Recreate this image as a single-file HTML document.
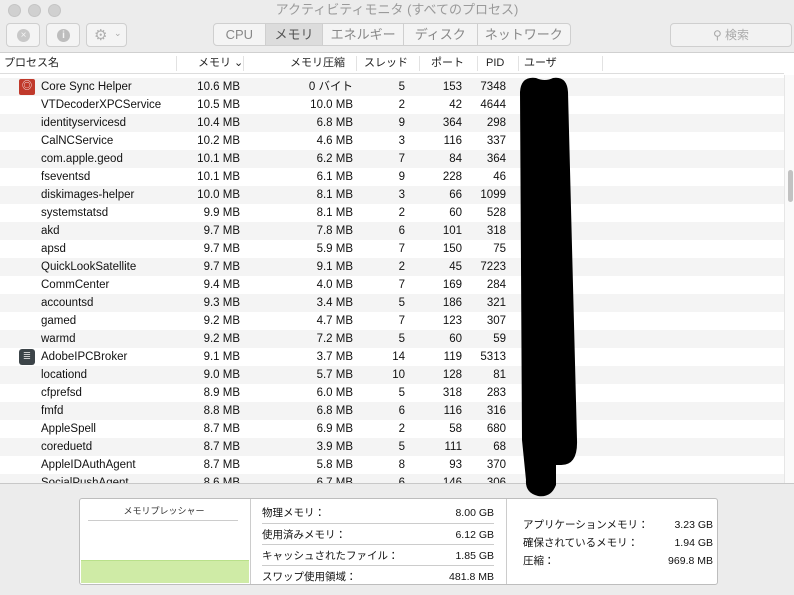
<!DOCTYPE html>
<html><head><meta charset="utf-8"><style>
*{margin:0;padding:0;box-sizing:border-box}
body{width:794px;height:595px;overflow:hidden;background:#fff;font-family:"Liberation Sans","Noto Sans CJK JP",sans-serif;font-size:11px;color:#111;position:relative}
.abs{position:absolute}
.tb{left:0;top:0;width:794px;height:53px;background:#ececec;border-bottom:1px solid #d0d0d0}
.dot{width:13px;height:13px;border-radius:50%;background:#d0d0d0;top:4px;border:1px solid #c4c4c4}
.btn{height:24px;top:23px;border:1px solid #cfcfcf;border-radius:4px;background:#f4f4f4}
.seg{top:23px;height:23px;border:1px solid #cfcfcf;border-radius:4px;background:#f4f4f4;display:flex;left:213px;width:358px;overflow:hidden}
.seg div{border-right:1px solid #cfcfcf;text-align:center;line-height:21px;font-size:13px;color:#888}
.hd{top:53px;height:21px;left:0;width:784px;border-bottom:1px solid #ddd;background:#fff}
.hd span{position:absolute;top:3px;font-size:11px;line-height:14px;color:#222}
.vs{position:absolute;top:3px;width:1px;height:15px;background:#e2e2e2}
.row{left:0;width:784px;height:18px}
.row span{position:absolute;top:2px;font-size:11.5px;line-height:14px}
.r{text-align:right}
.bp div{line-height:14px}
</style></head><body>
<div class="abs tb"></div>
<div class="abs dot" style="left:8px"></div><div class="abs dot" style="left:28px"></div><div class="abs dot" style="left:48px"></div>
<div class="abs" style="top:2px;left:0;width:794px;text-align:center;font-size:13px;line-height:16px;color:#9a9a9a">アクティビティモニタ (すべてのプロセス)</div>
<div class="abs btn" style="left:6px;width:34px"><div style="position:absolute;left:10px;top:5px;width:13px;height:13px;border-radius:50%;background:#c8c8c8;color:#f4f4f4;font-size:10px;line-height:13px;text-align:center">×</div></div>
<div class="abs btn" style="left:46px;width:34px"><div style="position:absolute;left:10px;top:5px;width:13px;height:13px;border-radius:50%;background:#bdbdbd;color:#f4f4f4;font-size:10px;font-weight:bold;line-height:13px;text-align:center">i</div></div>
<div class="abs btn" style="left:86px;width:41px"><span style="position:absolute;left:7px;top:2px;font-size:15px;color:#b0b0b0">⚙</span><span style="position:absolute;left:27px;top:4px;font-size:9px;color:#aaa">⌄</span></div>
<div class="abs seg"><div style="width:52px">CPU</div><div style="width:58px;background:#dcdcdc;color:#555">メモリ</div><div style="width:81px">エネルギー</div><div style="width:74px">ディスク</div><div style="width:93px;border:none">ネットワーク</div></div>
<div class="abs btn" style="left:670px;width:122px;background:#f2f2f2;color:#aaa;font-size:12px;text-align:center;line-height:22px">⚲ 検索</div>
<div class="abs hd">
<span style="left:4px">プロセス名</span><div class="vs" style="left:176px"></div>
<span style="left:198px">メモリ ⌄</span><div class="vs" style="left:243px"></div>
<span style="left:290px">メモリ圧縮</span><div class="vs" style="left:356px"></div>
<span style="left:364px">スレッド</span><div class="vs" style="left:419px"></div>
<span style="left:431px">ポート</span><div class="vs" style="left:477px"></div>
<span style="left:486px">PID</span><div class="vs" style="left:518px"></div>
<span style="left:524px">ユーザ</span><div class="vs" style="left:602px"></div>
</div>
<div id="rows"></div>
<div class="abs" style="left:784px;top:75px;width:10px;height:408px;background:#fafafa;border-left:1px solid #e6e6e6"></div>
<div class="abs" style="left:788px;top:170px;width:5px;height:32px;background:#c2c2c2;border-radius:3px"></div>
<div class="abs" style="left:0;top:483px;width:794px;height:112px;background:#ececec;border-top:1px solid #c8c8c8"></div>
<svg class="abs" style="left:0;top:0" width="794" height="595"><path d="M520,92 Q521,76 536,78 Q545,82 553,78 Q567,76 568,92 L577,440 Q578,466 560,465 L556,465 L556,485 Q551,498 538,496 Q525,493 526,480 L522,440 Z" fill="#000"/></svg>
<div class="abs" style="left:79px;top:498px;width:639px;height:87px;background:#fff;border:1px solid #bdbdbd;border-radius:3px"></div>
<div class="abs" style="top:505px;text-align:center;font-size:9px;line-height:12px;color:#333;left:80px;width:168px">メモリプレッシャー</div>
<div class="abs" style="left:88px;top:520px;width:150px;height:1px;background:#ccc"></div>
<div class="abs" style="left:81px;top:560px;width:168px;height:23px;background:#cfeba6;border-top:1px solid #b9e08a"></div>
<div class="abs" style="left:250px;top:499px;width:1px;height:85px;background:#ccc"></div>
<div class="abs" style="left:506px;top:499px;width:1px;height:85px;background:#ccc"></div>
<div class="abs bp" style="left:262px;top:503px;width:232px;font-size:10.5px">
<div style="height:21px;border-bottom:1px solid #ccc;display:flex;justify-content:space-between;padding-top:3px"><span>物理メモリ：</span><span>8.00 GB</span></div>
<div style="height:21px;border-bottom:1px solid #ccc;display:flex;justify-content:space-between;padding-top:4px"><span>使用済みメモリ：</span><span>6.12 GB</span></div>
<div style="height:21px;border-bottom:1px solid #ccc;display:flex;justify-content:space-between;padding-top:4px"><span>キャッシュされたファイル：</span><span>1.85 GB</span></div>
<div style="height:21px;display:flex;justify-content:space-between;padding-top:4px"><span>スワップ使用領域：</span><span>481.8 MB</span></div>
</div>
<div class="abs" style="left:523px;top:516px;width:190px;font-size:10.5px;line-height:18px">
<div style="display:flex;justify-content:space-between"><span>アプリケーションメモリ：</span><span>3.23 GB</span></div>
<div style="display:flex;justify-content:space-between"><span>確保されているメモリ：</span><span>1.94 GB</span></div>
<div style="display:flex;justify-content:space-between"><span>圧縮：</span><span>969.8 MB</span></div>
</div>
<script>
var d=[["Core Sync Helper","10.6 MB","0 バイト",5,153,7348],["VTDecoderXPCService","10.5 MB","10.0 MB",2,42,4644],["identityservicesd","10.4 MB","6.8 MB",9,364,298],["CalNCService","10.2 MB","4.6 MB",3,116,337],["com.apple.geod","10.1 MB","6.2 MB",7,84,364],["fseventsd","10.1 MB","6.1 MB",9,228,46],["diskimages-helper","10.0 MB","8.1 MB",3,66,1099],["systemstatsd","9.9 MB","8.1 MB",2,60,528],["akd","9.7 MB","7.8 MB",6,101,318],["apsd","9.7 MB","5.9 MB",7,150,75],["QuickLookSatellite","9.7 MB","9.1 MB",2,45,7223],["CommCenter","9.4 MB","4.0 MB",7,169,284],["accountsd","9.3 MB","3.4 MB",5,186,321],["gamed","9.2 MB","4.7 MB",7,123,307],["warmd","9.2 MB","7.2 MB",5,60,59],["AdobeIPCBroker","9.1 MB","3.7 MB",14,119,5313],["locationd","9.0 MB","5.7 MB",10,128,81],["cfprefsd","8.9 MB","6.0 MB",5,318,283],["fmfd","8.8 MB","6.8 MB",6,116,316],["AppleSpell","8.7 MB","6.9 MB",2,58,680],["coreduetd","8.7 MB","3.9 MB",5,111,68],["AppleIDAuthAgent","8.7 MB","5.8 MB",8,93,370],["SocialPushAgent","8.6 MB","6.7 MB",6,146,306]];
var h="";d.forEach(function(r,i){var y=78+18*i;if(y>483)return;var hh=Math.min(18,483-y);
h+='<div class="abs row" style="top:'+y+'px;height:'+hh+'px;overflow:hidden;background:'+(i%2?'#fff':'#f4f4f4')+'">';
if(i==0)h+='<div style="position:absolute;left:19px;top:1px;width:16px;height:16px;background:#c0392b;border-radius:2px;color:#fff;font-size:10px;text-align:center;line-height:16px">◎</div>';
if(i==15)h+='<div style="position:absolute;left:19px;top:1px;width:16px;height:16px;background:#3c4448;border-radius:3px;color:#ccc;font-size:10px;text-align:center;line-height:16px">≣</div>';
h+='<span style="left:41px">'+r[0]+'</span><span class="r" style="right:544px">'+r[1]+'</span><span class="r" style="right:431px">'+r[2]+'</span><span class="r" style="right:379px">'+r[3]+'</span><span class="r" style="right:322px">'+r[4]+'</span><span class="r" style="right:278px">'+r[5]+'</span></div>';});
document.getElementById("rows").innerHTML=h;
</script>
</body></html>
